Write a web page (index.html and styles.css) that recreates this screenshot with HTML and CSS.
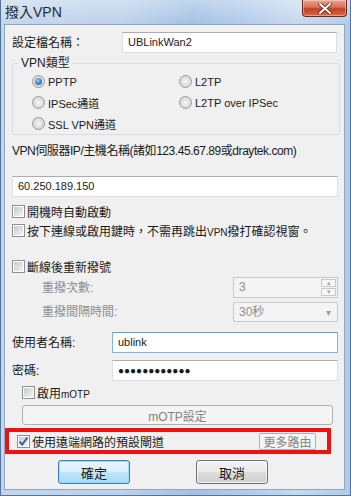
FILE: index.html
```html
<!DOCTYPE html>
<html lang="zh-Hant">
<head>
    <meta charset="UTF-8">
    <meta name="viewport" content="width=device-width, initial-scale=1.0">
    <title>撥入VPN</title>
    <link rel="stylesheet" href="styles.css">
</head>
<body>

    <div class="window">
        <div class="titlebar">
            <span class="title">撥入VPN</span>
            <span class="close">
                <svg width="14" height="11" viewBox="0 0 14 11">
                    <path d="M2 1 L12 10 M12 1 L2 10" stroke="#5a1810" stroke-width="3.4" stroke-linecap="round"/>
                    <path d="M2 1 L12 10 M12 1 L2 10" stroke="#ffffff" stroke-width="2" stroke-linecap="round"/>
                </svg>
            </span>
        </div>

        <div class="panel">
            <div class="row name-row">
                <div class="lbl big w-name">設定檔名稱：</div>
                <div class="field name-field">UBLinkWan2</div>
            </div>

            <fieldset class="group">
                <legend>VPN類型</legend>
                <div class="radios">
                    <div class="opt"><i class="radio on"></i>PPTP</div>
                    <div class="opt"><i class="radio"></i>L2TP</div>
                    <div class="opt"><i class="radio"></i>IPSec通道</div>
                    <div class="opt"><i class="radio"></i>L2TP over IPSec</div>
                    <div class="opt"><i class="radio"></i>SSL VPN通道</div>
                </div>
            </fieldset>

            <div class="server-lbl">VPN伺服器IP/主機名稱(諸如123.45.67.89或draytek.com)</div>
            <div class="field server-field">60.250.189.150</div>

            <div class="check first"><i class="box"></i><span>開機時自動啟動</span></div>
            <div class="check"><i class="box"></i><span>按下連線或啟用鍵時，不需再跳出<span class="small">VPN</span>撥打確認視窗。</span></div>

            <div class="check redial"><i class="box"></i><span>斷線後重新撥號</span></div>
            <div class="row sub-row">
                <div class="lbl dim">重撥次數:</div>
                <div class="field off spin">
                    <span>3</span>
                    <span class="spin-btns">
                        <span class="sb">&#9652;</span>
                        <span class="sb">&#9662;</span>
                    </span>
                </div>
            </div>
            <div class="row sub-row second">
                <div class="lbl dim">重撥間隔時間:</div>
                <div class="field off select">
                    <span>30秒</span>
                    <span class="arrow">&#9662;</span>
                </div>
            </div>

            <div class="row user-row">
                <div class="lbl big w-user">使用者名稱:</div>
                <div class="field focus user-field">ublink</div>
            </div>
            <div class="row pass-row">
                <div class="lbl big w-user">密碼:</div>
                <div class="field user-field dots">●●●●●●●●●●●●</div>
            </div>

            <div class="check motp"><i class="box"></i><span>啟用<span class="small">mOTP</span></span></div>
            <div class="btn off motp-btn">mOTP設定</div>

            <div class="redbox">
                <div class="check gw"><i class="box checked">
                    <svg width="11" height="11" viewBox="0 0 11 11"><path d="M1.5 5.5 L4.2 8.6 L9.5 1.5" stroke="#3a4fa8" stroke-width="1.8" fill="none"/></svg>
                </i><span>使用遠端網路的預設閘道</span></div>
                <div class="btn off more-btn">更多路由</div>
            </div>

            <div class="actions">
                <div class="btn primary">確定</div>
                <div class="btn">取消</div>
            </div>
        </div>
    </div>

</body>
</html>
```

FILE: styles.css
```css
* {
    box-sizing: border-box;
}
body {
    margin: 0;
    width: 351px;
    height: 496px;
    overflow: hidden;
    font-family: "Liberation Sans", "Noto Sans CJK TC", sans-serif;
    font-size: 12px;
    color: #1a1a1a;
}

.window {
    width: 351px;
    height: 496px;
    border: 1px solid #55749a;
    border-top: none;
    background:
        linear-gradient(to bottom, rgba(255,255,255,0.35), rgba(255,255,255,0) 24px),
        linear-gradient(to right, #c3d6ec 0%, #bcd1ea 35%, #a3c1e4 55%, #b2cbea 70%, #c7d9ee 85%, #b3cae7 100%);
    padding: 0 5px 5px 3px;
}

.titlebar {
    height: 24px;
    display: flex;
    justify-content: space-between;
    align-items: flex-start;
}
.title {
    font-size: 14px;
    line-height: 24px;
    padding-left: 1px;
    color: #1e2a36;
}
.close {
    width: 45px;
    height: 17px;
    margin-right: -2px;
    border: 1px solid #6a2a22;
    border-top: none;
    border-radius: 0 0 4px 4px;
    background: linear-gradient(to bottom, #e8a391 0%, #d6705a 45%, #c2401f 55%, #d86a4a 100%);
    display: flex;
    align-items: center;
    justify-content: center;
    box-shadow: inset 0 0 0 1px rgba(255,255,255,0.35);
}

.panel {
    height: 466px;
    background-color: #f0f0f0;
    border: 1px solid #8fa7c4;
    padding: 0 4px 0 7px;
    display: flex;
    flex-direction: column;
}

.row {
    display: flex;
    align-items: center;
}
.lbl {
    line-height: 16px;
}
.big {
    font-size: 12px;
}
.dim {
    color: #8d8d8d;
}
.small {
    font-size: 10px;
}

.field {
    height: 21px;
    background-color: white;
    border: 1px solid #dbdfe6;
    border-top-color: #abadb3;
    padding: 0 4px 0 5px;
    line-height: 19px;
    font-size: 11px;
}
.field.focus {
    border-color: #7eb4ea;
    border-top-color: #569de5;
}
.field.off {
    background-color: #f4f4f4;
    border-color: #c9c9c9;
    color: #8d8d8d;
}

.name-row {
    margin-top: 7px;
}
.w-name {
    width: 110px;
}
.name-field {
    width: 215px;
}

.group {
    margin: 3px 0 0 0;
    width: 328px;
    height: 79px;
    border: 1px solid #d5dfe5;
    border-radius: 3px;
    padding: 0 0 0 19px;
}
.group legend {
    padding: 0 2px;
    margin-left: -13px;
    line-height: 14px;
    font-size: 12px;
}
.radios {
    display: grid;
    grid-template-columns: 147px 1fr;
    grid-auto-rows: 21px;
    margin-top: 1px;
    font-size: 11px;
}
.opt {
    display: flex;
    align-items: center;
    gap: 3px;
}
.radio {
    width: 13px;
    height: 13px;
    border-radius: 50%;
    border: 1px solid #9a9a9a;
    background: radial-gradient(circle at 50% 50%, #f4f4f4 0%, #dcdcdc 60%, #c8c8c8 100%);
    display: flex;
    align-items: center;
    justify-content: center;
}
.radio.on::after {
    content: "";
    width: 7px;
    height: 7px;
    border-radius: 50%;
    background: radial-gradient(circle at 40% 35%, #9fd0f5 0%, #3d87c9 50%, #1b4f8f 100%);
}

.server-lbl {
    margin-top: 8px;
    line-height: 16px;
    font-size: 12px;
    letter-spacing: -0.45px;
}
.server-field {
    margin-top: 17px;
    width: 326px;
}

.check {
    display: flex;
    align-items: center;
    gap: 2px;
    height: 19px;
    font-size: 12px;
}
.check.first {
    margin-top: 5px;
}
.box {
    width: 13px;
    height: 13px;
    flex: none;
    border: 1px solid #8e8f8f;
    background: white;
    padding: 1px;
    display: flex;
    align-items: center;
    justify-content: center;
}
.box::before {
    content: "";
    width: 9px;
    height: 9px;
    background: linear-gradient(135deg, #c6cad0, #f4f4f4);
}
.box.checked {
    position: relative;
}
.box.checked svg {
    position: absolute;
    left: 0;
    top: 0;
}
.check.redial {
    margin-top: 17px;
}

.sub-row {
    margin-top: 1px;
    padding-left: 30px;
    justify-content: space-between;
    width: 326px;
}
.sub-row.second {
    margin-top: 4px;
}
.sub-row .lbl {
    font-size: 12px;
}
.spin, .select {
    width: 105px;
    display: flex;
    justify-content: space-between;
    align-items: center;
    padding-right: 1px;
    font-size: 12px;
}
.select {
    height: 20px;
    border-radius: 2px;
    padding-right: 6px;
}
.spin-btns {
    display: flex;
    flex-direction: column;
    gap: 1px;
}
.sb {
    width: 15px;
    height: 8px;
    border: 1px solid #c9c9c9;
    background: #f7f7f7;
    font-size: 7px;
    line-height: 6px;
    text-align: center;
    color: #a8a8a8;
}
.arrow {
    font-size: 10px;
    color: #a0a0a0;
}

.user-row {
    margin-top: 10px;
}
.pass-row {
    margin-top: 7px;
}
.w-user {
    width: 100px;
}
.user-field {
    width: 226px;
}
.dots {
    font-size: 10px;
    letter-spacing: 0;
    padding-left: 5px;
}

.check.motp {
    margin-top: 2px;
    margin-left: 10px;
    height: 18px;
}

.btn {
    display: flex;
    align-items: center;
    justify-content: center;
    border: 1px solid #707070;
    border-radius: 3px;
    background: linear-gradient(to bottom, #f2f2f2 0%, #ebebeb 48%, #dddddd 52%, #cfcfcf 100%);
    font-size: 13px;
    box-shadow: inset 0 0 0 1px rgba(255,255,255,0.7);
}
.btn.off {
    border-color: #adb2b5;
    background: #f4f4f4;
    color: #838383;
    box-shadow: none;
}
.motp-btn {
    margin-top: 4px;
    margin-left: 10px;
    width: 311px;
    height: 20px;
    font-size: 12px;
}

.redbox {
    margin-top: 3px;
    margin-left: -7px;
    width: 326px;
    height: 26px;
    border: 4px solid #ee1111;
    display: flex;
    align-items: center;
    justify-content: space-between;
    padding: 0 11px 0 8px;
}
.more-btn {
    width: 57px;
    height: 17px;
    border-radius: 2px;
    font-size: 12px;
}

.actions {
    margin-top: 6px;
    display: flex;
    gap: 66px;
    padding-left: 46px;
}
.actions .btn {
    width: 72px;
    height: 24px;
}
.btn.primary {
    border-color: #3c7fb1;
    background: linear-gradient(to bottom, #eaf6fd 0%, #d9f0fc 48%, #bee6fd 52%, #a7d9f5 100%);
    box-shadow: inset 0 0 0 1px #9ed9f7;
}
```
